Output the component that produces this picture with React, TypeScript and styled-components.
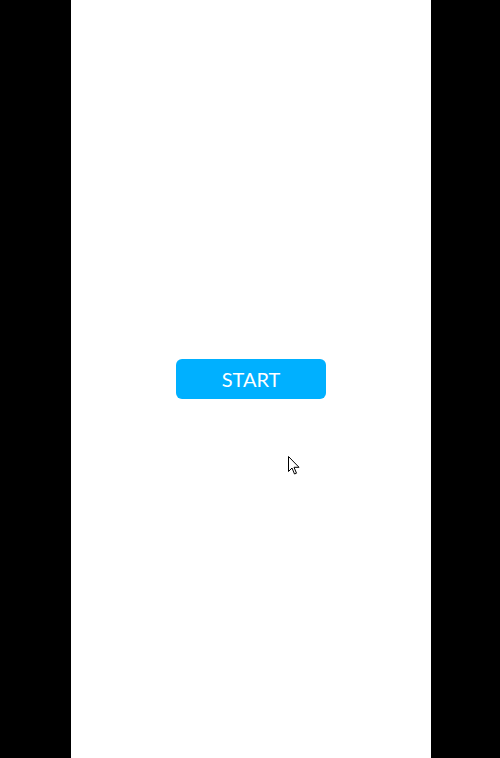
import React from "react";
import styled, { createGlobalStyle } from "styled-components";

const GlobalStyle = createGlobalStyle`
  html, body {
    margin: 0;
    padding: 0;
    background: #000;
  }
  #root {
    height: 100vh;
  }
`;

const Stage = styled.div`
  display: flex;
  justify-content: center;
  height: 758px;
  background: #000;
  padding-left: 2px;
  box-sizing: border-box;
`;

const Screen = styled.div`
  position: relative;
  width: 360px;
  height: 100%;
  background: #fff;
  display: flex;
  align-items: center;
  justify-content: center;
`;

const StartButton = styled.button`
  width: 150px;
  height: 40px;
  border: none;
  border-radius: 6px;
  background: #00b0ff;
  color: #fff;
  font-family: Lato, "Liberation Sans", sans-serif;
  font-size: 20px;
  padding: 0;
  cursor: pointer;
`;

const Pointer = styled.svg`
  position: absolute;
  left: 217px;
  top: 456px;
`;

export default function App() {
  return (
    <>
      <GlobalStyle />
      <Stage>
        <Screen>
          <StartButton>START</StartButton>
          <Pointer width="14" height="20" viewBox="0 0 14 20">
            <path
              d="M0.5 0.5 L0.5 15.5 L4 12 L6.5 18 L8.5 17.2 L6 11.3 L11 11.3 Z"
              fill="#fff"
              stroke="#000"
              strokeWidth="1"
              strokeLinejoin="miter"
            />
          </Pointer>
        </Screen>
      </Stage>
    </>
  );
}
